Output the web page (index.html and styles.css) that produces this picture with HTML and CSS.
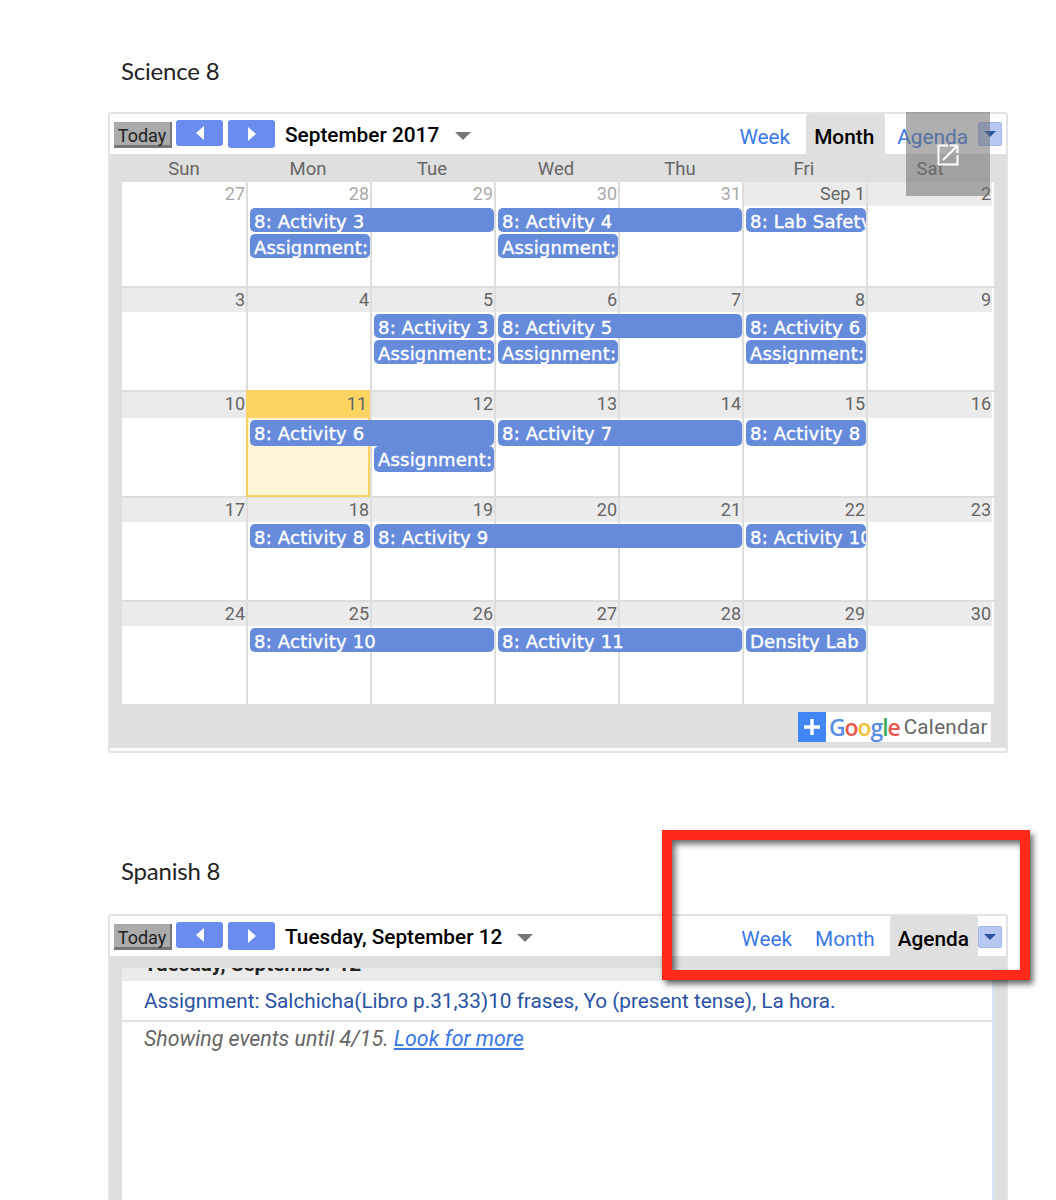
FILE: index.html
```html
<!DOCTYPE html>
<html lang="en">
<head>
<meta charset="utf-8">
<title>Class calendars</title>
<link rel="stylesheet" href="styles.css">
</head>
<body>
<main class="page">
  <section class="block block-first">
    <h2 class="heading">Science 8</h2>
    <div class="frame">
      <div class="toolbar">
        <button class="today">Today</button>
        <button class="nav nav-prev"><svg width="10" height="16" viewBox="0 0 10 16"><path d="M9 1v14L1 8z" fill="#fff"/></svg></button>
        <button class="nav nav-next"><svg width="10" height="16" viewBox="0 0 10 16"><path d="M1 1v14l8-7z" fill="#fff"/></svg></button>
        <span class="range">September 2017</span>
        <span class="caret"></span>
        <nav class="tabs">
          <a class="tab">Week</a>
          <a class="tab tab-on">Month</a>
          <a class="tab">Agenda</a>
        </nav>
        <button class="menu"><span class="menu-arrow"></span></button>
      </div>
      <div class="body">
        <div class="days">
          <span>Sun</span><span>Mon</span><span>Tue</span><span>Wed</span><span>Thu</span><span>Fri</span><span>Sat</span>
        </div>
        <div class="month">
          <div class="week">
            <div class="cell c1 off"><div class="date">27</div></div>
            <div class="cell c2 off"><div class="date">28</div></div>
            <div class="cell c3 off"><div class="date">29</div></div>
            <div class="cell c4 off"><div class="date">30</div></div>
            <div class="cell c5 off"><div class="date">31</div></div>
            <div class="cell c6"><div class="date">Sep 1</div></div>
            <div class="cell c7"><div class="date">2</div></div>
            <div class="ev c2 s2 r1">8: Activity 3</div>
            <div class="ev c4 s2 r1">8: Activity 4</div>
            <div class="ev c6 r1">8: Lab Safety</div>
            <div class="ev c2 r2">Assignment:</div>
            <div class="ev c4 r2">Assignment:</div>
          </div>
          <div class="week line">
            <div class="cell c1"><div class="date">3</div></div>
            <div class="cell c2"><div class="date">4</div></div>
            <div class="cell c3"><div class="date">5</div></div>
            <div class="cell c4"><div class="date">6</div></div>
            <div class="cell c5"><div class="date">7</div></div>
            <div class="cell c6"><div class="date">8</div></div>
            <div class="cell c7"><div class="date">9</div></div>
            <div class="ev c3 r1">8: Activity 3</div>
            <div class="ev c4 s2 r1">8: Activity 5</div>
            <div class="ev c6 r1">8: Activity 6</div>
            <div class="ev c3 r2">Assignment:</div>
            <div class="ev c4 r2">Assignment:</div>
            <div class="ev c6 r2">Assignment:</div>
          </div>
          <div class="week line week-tall">
            <div class="cell c1"><div class="date">10</div></div>
            <div class="cell c2 now"><div class="date">11</div></div>
            <div class="cell c3"><div class="date">12</div></div>
            <div class="cell c4"><div class="date">13</div></div>
            <div class="cell c5"><div class="date">14</div></div>
            <div class="cell c6"><div class="date">15</div></div>
            <div class="cell c7"><div class="date">16</div></div>
            <div class="ev c2 s2 r1">8: Activity 6</div>
            <div class="ev c4 s2 r1">8: Activity 7</div>
            <div class="ev c6 r1">8: Activity 8</div>
            <div class="ev c3 r2">Assignment:</div>
          </div>
          <div class="week line">
            <div class="cell c1"><div class="date">17</div></div>
            <div class="cell c2"><div class="date">18</div></div>
            <div class="cell c3"><div class="date">19</div></div>
            <div class="cell c4"><div class="date">20</div></div>
            <div class="cell c5"><div class="date">21</div></div>
            <div class="cell c6"><div class="date">22</div></div>
            <div class="cell c7"><div class="date">23</div></div>
            <div class="ev c2 r1">8: Activity 8</div>
            <div class="ev c3 s3 r1">8: Activity 9</div>
            <div class="ev c6 r1">8: Activity 10</div>
          </div>
          <div class="week line">
            <div class="cell c1"><div class="date">24</div></div>
            <div class="cell c2"><div class="date">25</div></div>
            <div class="cell c3"><div class="date">26</div></div>
            <div class="cell c4"><div class="date">27</div></div>
            <div class="cell c5"><div class="date">28</div></div>
            <div class="cell c6"><div class="date">29</div></div>
            <div class="cell c7"><div class="date">30</div></div>
            <div class="ev c2 s2 r1">8: Activity 10</div>
            <div class="ev c4 s2 r1">8: Activity 11</div>
            <div class="ev c6 r1">Density Lab</div>
          </div>
        </div>
        <div class="foot">
          <div class="gcal">
            <span class="gcal-plus"><svg width="20" height="20" viewBox="0 0 20 20"><path d="M10 2v16M2 10h16" stroke="#fff" stroke-width="3.4"/></svg></span>
            <span class="gcal-name"><span class="g-b">G</span><span class="g-r">o</span><span class="g-y">o</span><span class="g-b">g</span><span class="g-g">l</span><span class="g-r">e</span></span>
            <span class="gcal-cal">Calendar</span>
          </div>
        </div>
      </div>
      <div class="popout">
        <svg width="22" height="22" viewBox="0 0 22 22" fill="none" stroke="#fff" stroke-width="2"><path d="M11 1.500H1.500v19h19V11M6 16L20 2M13 1.500h7.500V9"/></svg>
      </div>
    </div>
  </section>

  <section class="block block-second">
    <h2 class="heading">Spanish 8</h2>
    <div class="frame frame-agenda">
      <div class="toolbar">
        <button class="today">Today</button>
        <button class="nav nav-prev"><svg width="10" height="16" viewBox="0 0 10 16"><path d="M9 1v14L1 8z" fill="#fff"/></svg></button>
        <button class="nav nav-next"><svg width="10" height="16" viewBox="0 0 10 16"><path d="M1 1v14l8-7z" fill="#fff"/></svg></button>
        <span class="range">Tuesday, September 12</span>
        <span class="caret"></span>
        <nav class="tabs tabs-agenda">
          <a class="tab">Week</a>
          <a class="tab">Month</a>
          <a class="tab tab-on">Agenda</a>
        </nav>
        <button class="menu menu-agenda"><span class="menu-arrow"></span></button>
      </div>
      <div class="body body-agenda">
        <div class="agenda">
          <div class="agenda-day"><span>Tuesday, September 12</span></div>
          <div class="agenda-item">Assignment: Salchicha(Libro p.31,33)10 frases, Yo (present tense), La hora.</div>
          <div class="agenda-more">Showing events until 4/15. <a class="more-link">Look for more</a></div>
        </div>
      </div>
    </div>
  </section>
  <div class="callout"></div>
</main>
</body>
</html>
```

FILE: styles.css
```css
* { box-sizing: border-box; }
html, body { margin: 0; padding: 0; background: #fff; }
body { height: 1200px; overflow: hidden; font-family: Roboto, "Liberation Sans", sans-serif; }
.page { position: relative; height: 1200px; padding-left: 108px; }
.block { width: 900px; }
.block-first { padding-top: 55px; }
.block-second { padding-top: 102px; }
.heading {
  margin: 0 0 25px 13px;
  font: 400 24px/32px Lato, "Liberation Sans", sans-serif;
  color: #222;
  letter-spacing: -0.2px;
}
.block-second .heading { margin-bottom: 27px; }
.frame {
  position: relative;
  width: 900px;
  padding-bottom: 3px;
  border: 2px solid #e3e3e3;
  border-radius: 3px;
  background: #fff;
}
.frame-agenda { height: 640px; }

.toolbar { display: flex; align-items: flex-start; height: 40px; }
.today {
  width: 58px; height: 26px; margin: 8px 0 0 4px; padding: 4px 0 0;
  background: #ababab; color: #222;
  border: 0; border-right: 2px solid #777; border-bottom: 3px solid #777;
  font: 400 18px/20px Roboto, sans-serif;
}
.nav {
  display: flex; align-items: center; justify-content: center;
  width: 47px; height: 26px; margin: 6px 0 0 4px; padding: 0;
  background: #6a8cee; border: 0; border-radius: 3px;
}
.nav-next { margin-left: 5px; height: 28px; }
.range { margin: 8px 0 0 10px; font: 500 20.8px/26px Roboto, sans-serif; color: #000; white-space: nowrap; }
.caret {
  width: 0; height: 0; margin: 18px 0 0 16px;
  border-left: 8px solid transparent; border-right: 8px solid transparent; border-top: 8px solid #777;
}
.block-second .caret { margin-left: 15px; }
.tabs { display: flex; margin-left: auto; height: 40px; }
.tab {
  display: block; height: 40px; padding: 10px 8px 0;
  font: 400 20.8px/26px Roboto, sans-serif; color: #3b78e7; white-space: nowrap;
}
.tab + .tab { margin-left: 8px; }
.tab-on { padding-right: 11px; background: #dfdfdf; color: #000; font-weight: 500; border-radius: 3px 3px 0 0; }
.tab-on + .tab { margin-left: 4px; }
.tabs-agenda .tab + .tab { margin-left: 7px; }
.tabs-agenda .tab-on { padding-right: 9px; }
.menu {
  display: flex; align-items: center; justify-content: center;
  width: 24px; height: 24px; margin: 8px 4px 0 2px; padding: 0;
  background: #b7c9f3; border: 1px solid #a3b8e6; border-radius: 2px;
}
.menu-agenda { height: 22px; margin-left: 0; margin-top: 10px; }
.menu-arrow { width: 0; height: 0; border-left: 6px solid transparent; border-right: 6px solid transparent; border-top: 6px solid #2952a3; }

.body { background: #dfdfdf; padding: 0 12px; height: 594px; }
.body-agenda { height: 598px; padding-top: 12px; }
.days { display: grid; grid-template-columns: repeat(6, 124px) 128px; height: 28px; }
.days span { text-align: center; font-size: 18.5px; line-height: 30px; color: #666; }

.month { background: #fff; }
.week {
  display: grid;
  grid-template-columns: repeat(6, 124px) 128px;
  grid-template-rows: 26px 26px 26px 1fr;
  height: 104px;
  --head: 24px;
  --ev: 24px;
}
.week.line { border-top: 2px solid #ddd; }
.week-tall { grid-template-rows: 28px 26px 26px 1fr; height: 106px; --head: 26px; --ev: 26px; }
.cell { grid-row: 1 / -1; border-left: 2px solid #ddd; min-width: 0; }
.cell.c1 { border-left: 0; }
.cell.c7 { padding-right: 2px; }
.date {
  height: var(--head);
  padding-right: 1px;
  background: #ebebeb;
  text-align: right;
  font-size: 18px; line-height: 24px; color: #666;
}
.off .date { background: transparent; color: #aaa; }
.now {
  position: relative; z-index: 2;
  margin-top: -2px; margin-bottom: -1px;
  background: #fff4d6;
  border: 2px solid #fbd35e; border-top: 0;
}
.now .date { background: #fcd462; height: calc(var(--head) + 2px); padding-top: 2px; margin-right: -2px; padding-right: 3px; margin-left: -2px; }
.c1 { grid-column-start: 1; }
.c2 { grid-column-start: 2; }
.c3 { grid-column-start: 3; }
.c4 { grid-column-start: 4; }
.c5 { grid-column-start: 5; }
.c6 { grid-column-start: 6; }
.c7 { grid-column-start: 7; }
.s2 { grid-column-end: span 2; }
.s3 { grid-column-end: span 3; }
.r1 { grid-row: 2; }
.r2 { grid-row: 3; }
.ev {
  position: relative; z-index: 3;
  height: var(--ev);
  margin-left: 4px;
  padding-left: 4px;
  overflow: hidden;
  white-space: nowrap;
  background: #668bdb;
  border-radius: 5px;
  color: #fff;
  font: 400 18px/28px "DejaVu Sans", sans-serif;
  letter-spacing: 0.2px;
  -webkit-text-stroke: 0.4px #fff;
}
.foot { display: flex; justify-content: flex-end; padding: 8px 3px 0 0; }
.gcal { display: flex; align-items: center; height: 30px; width: 193px; background: #fff; }
.gcal-plus { display: flex; align-items: center; justify-content: center; width: 28px; height: 30px; background: #4285f4; }
.gcal-name { margin-left: 3px; font: 600 23px/30px "Open Sans", sans-serif; letter-spacing: -1.1px; }
.g-b { color: #5b8ee6; }
.g-r { color: #e8574b; }
.g-y { color: #f2c232; }
.g-g { color: #3fa85a; }
.gcal-cal { margin-left: 4px; font: 400 20.6px/30px Roboto, sans-serif; color: #666; letter-spacing: 0.3px; }

.popout {
  position: absolute; left: 796px; top: -2px;
  display: flex; align-items: center; justify-content: center;
  width: 84px; height: 84px;
  background: rgba(110, 110, 110, 0.55);
  padding-top: 1px;
}

.agenda { background: #fff; height: 100%; border-right: 2px solid #d8e2f8; }
.agenda-day {
  display: flex; align-items: flex-end; height: 13px; overflow: hidden;
  background: #ebebeb; padding-left: 22px;
  font: 700 20.6px/24px Roboto, sans-serif; color: #222;
}
.agenda-day span { flex: none; margin-bottom: 5px; }
.agenda-item {
  height: 41px; padding: 7px 0 0 22px;
  border-bottom: 2px solid #e2e2e2;
  font-size: 20.75px; line-height: 26px; color: #2952a3; white-space: nowrap;
}
.agenda-more { padding: 4px 0 0 22px; font-size: 21.4px; line-height: 26px; font-style: italic; color: #666; }
.more-link { color: #3b78e7; text-decoration: underline; }

.callout {
  position: absolute; left: 662px; top: 830px;
  width: 368px; height: 150px;
  border: 10px solid #ff2a1c;
  box-shadow: 3px 4px 6px rgba(0, 0, 0, 0.6), inset 3px 4px 6px rgba(0, 0, 0, 0.6);
}
```
